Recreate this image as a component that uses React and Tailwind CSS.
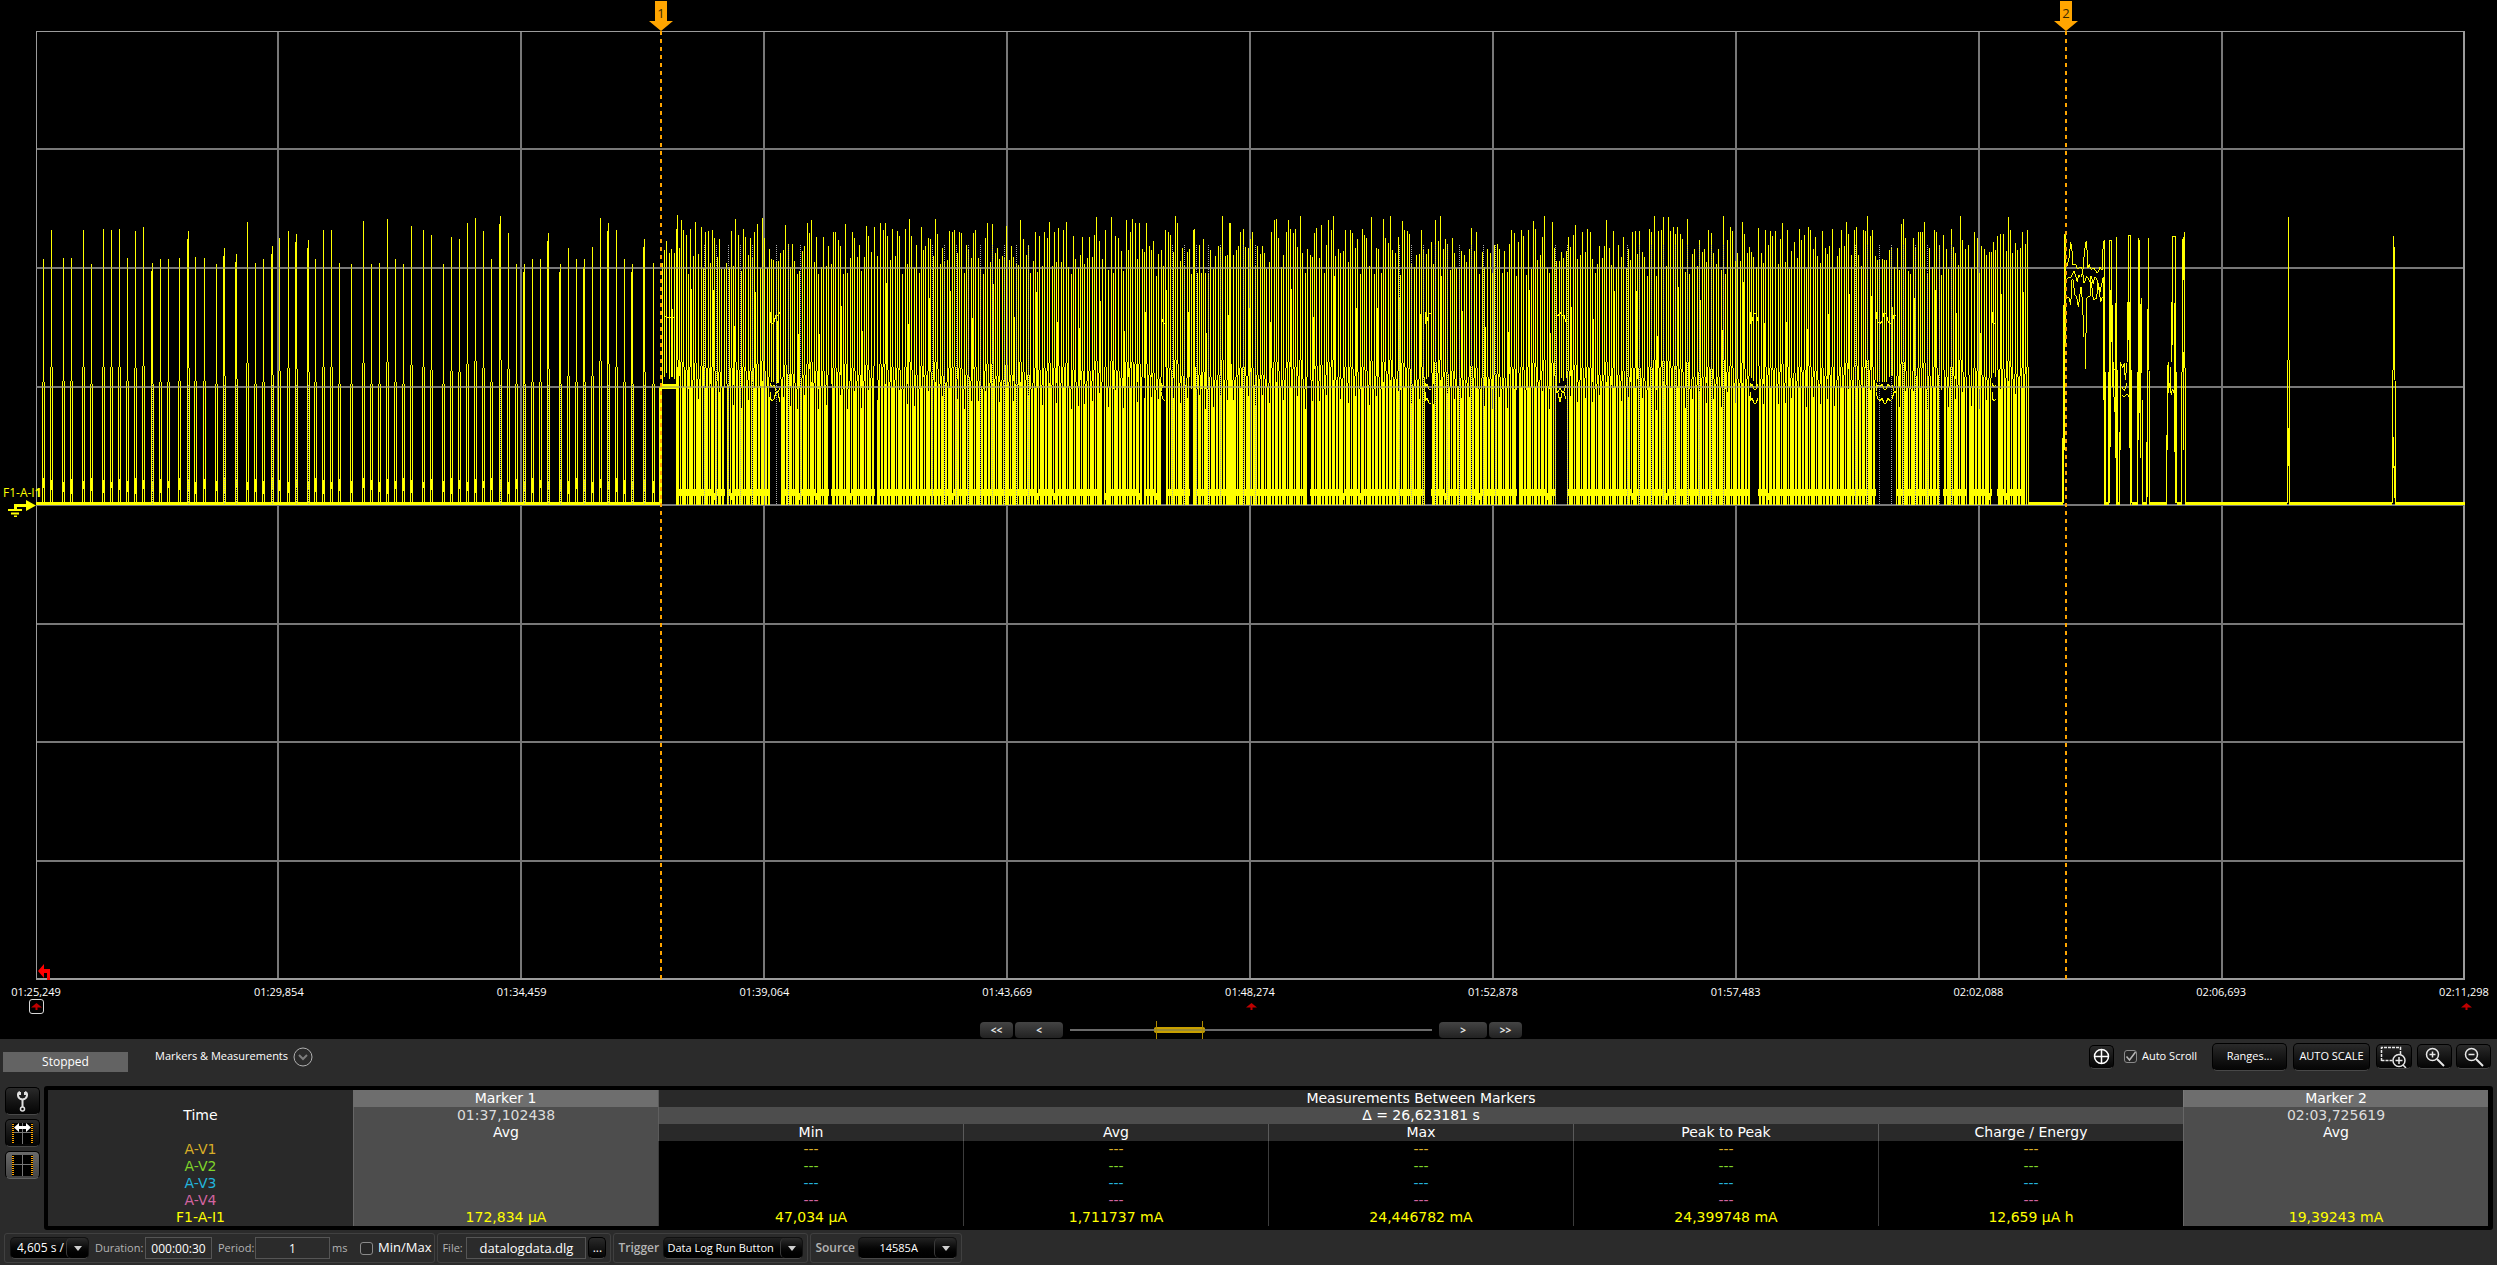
import React, { useState } from 'react';

const GRID_X = [278, 521, 764, 1007, 1250, 1493, 1736, 1979, 2222];
const GRID_Y = [149, 268, 387, 505, 624, 742, 861];

const TIME_LABELS = [
  '01:25,249', '01:29,854', '01:34,459', '01:39,064', '01:43,669', '01:48,274',
  '01:52,878', '01:57,483', '02:02,088', '02:06,693', '02:11,298',
];

// x, top y of the single pulses before marker 1
const PULSES = [
  43, 259, 51, 230, 63, 258, 71, 258, 83, 230, 91, 264, 103, 229, 111, 230, 119, 229, 127, 258,
  135, 231, 143, 227, 152, 263, 160, 259, 168, 259, 179, 258, 188, 231, 195, 257, 204, 258,
  216, 264, 224, 248, 236, 254, 247, 222, 255, 263, 263, 259, 272, 246, 279, 238, 288, 231,
  296, 234, 308, 240, 315, 259, 323, 230, 331, 230, 339, 263, 351, 264, 363, 221, 371, 264,
  379, 263, 387, 219, 395, 259, 403, 264, 411, 226, 423, 230, 431, 235, 443, 264, 451, 237,
  459, 239, 467, 223, 475, 218, 483, 231, 491, 259, 500, 216, 508, 233, 516, 264, 524, 264,
  532, 259, 540, 259, 548, 233, 560, 264, 568, 248, 576, 259, 584, 259, 592, 247, 600, 218,
  608, 223, 616, 230, 624, 259, 632, 264, 644, 239, 653, 263,
];

// burst data: pairs in thirds of a unit, measured from the segment origin
const BURSTS = [
  {
    x0: 640,
    y0: 180,
    peaks: [
      66, 250, 74, 210, 80, 183, 88, 219, 95, 207, 103, 219, 109, 147, 112, 105, 124, 120, 130, 150, 139, 165,
      151, 148, 166, 126, 184, 141, 196, 156, 205, 153, 217, 150, 224, 174, 238, 178, 274, 153, 286, 117,
      295, 165, 310, 147, 316, 171, 331, 174, 343, 156, 352, 132, 367, 114, 373, 174, 388, 207, 394, 237,
      400, 240, 408, 243, 415, 243, 421, 219, 436, 135, 445, 192, 457, 192, 493, 198, 502, 129, 508, 159,
      514, 120, 529, 171, 550, 171, 565, 198, 580, 156, 586, 156, 595, 180, 601, 198, 616, 132, 637, 156,
      643, 174, 658, 195, 679, 138, 685, 168, 703, 141, 721, 129, 730, 150, 736, 129, 742, 168, 757, 147,
      772, 153, 778, 168, 796, 147, 808, 117, 814, 168, 829, 195, 844, 141, 856, 198, 865, 174, 871, 177,
      886, 117, 892, 162, 907, 204, 928, 153, 937, 156, 943, 150, 958, 156, 964, 159, 979, 195, 1000, 159,
      1006, 150, 1036, 174, 1042, 129, 1057, 132, 1072, 204, 1099, 138, 1114, 198, 1141, 120, 1150, 177,
      1165, 198, 1186, 156, 1198, 168, 1213, 156, 1222, 174, 1228, 126, 1243, 156, 1255, 144, 1270, 150,
      1279, 126, 1300, 168, 1327, 171, 1348, 171, 1363, 165, 1369, 111, 1378, 183, 1396, 150, 1414, 111,
      1426, 168, 1435, 174, 1459, 120, 1471, 156, 1477, 117, 1486, 129,
    ],
  },
  {
    x0: 1130,
    y0: 200,
    peaks: [
      28, 69, 37, 147, 49, 69, 58, 138, 70, 123, 94, 150, 106, 90, 115, 96, 121, 105, 136, 48, 142, 69,
      157, 144, 178, 147, 190, 90, 193, 87, 208, 135, 220, 117, 241, 150, 265, 138, 277, 48, 286, 168,
      298, 69, 301, 69, 310, 165, 325, 138, 331, 96, 340, 87, 346, 141, 361, 117, 367, 96, 382, 138, 397, 138,
      403, 159, 424, 96, 433, 60, 439, 57, 445, 114, 469, 96, 475, 60, 481, 87, 490, 99, 496, 87, 502, 141,
      511, 48, 517, 159, 532, 147, 547, 171, 553, 99, 559, 84, 574, 75, 589, 135, 595, 60, 604, 90,
      610, 48, 616, 168, 625, 147, 631, 159, 646, 90, 661, 90, 667, 99, 682, 117, 697, 87, 703, 105,
      709, 114, 724, 51, 739, 144, 760, 57, 766, 114, 775, 129, 781, 48, 787, 150, 805, 111, 817, 63,
      823, 90, 832, 93, 838, 102, 874, 90, 880, 147, 895, 147, 904, 126, 916, 60, 925, 123, 931, 48,
      946, 117, 952, 132, 967, 114, 973, 159, 994, 153, 1003, 165, 1024, 84, 1039, 96, 1072, 147,
      1081, 159, 1093, 135, 1102, 132, 1123, 153, 1138, 132, 1144, 90, 1153, 99, 1165, 126, 1174, 90,
      1180, 108, 1195, 90, 1210, 63, 1216, 87, 1237, 111, 1243, 48, 1267, 66, 1273, 144, 1280, 183,
      1288, 183, 1294, 156, 1300, 174, 1309, 153, 1315, 111, 1321, 141, 1330, 105, 1336, 75,
    ],
  },
  {
    x0: 1580,
    y0: 200,
    peaks: [
      7, 96, 16, 156, 22, 87, 31, 96, 58, 138, 73, 138, 79, 60, 88, 144, 100, 93, 115, 135, 130, 111,
      145, 147, 157, 96, 166, 93, 178, 93, 187, 156, 208, 87, 214, 96, 223, 48, 235, 93, 244, 90, 250, 51,
      265, 51, 271, 93, 280, 81, 286, 102, 292, 81, 301, 102, 307, 117, 322, 57, 343, 147, 358, 120,
      373, 147, 385, 90, 394, 99, 400, 159, 415, 147, 430, 48, 442, 120, 451, 81, 457, 93, 487, 66,
      493, 102, 508, 141, 514, 156, 520, 171, 535, 84, 544, 159, 556, 90, 565, 135, 571, 93, 577, 108,
      586, 93, 601, 117, 607, 69, 622, 90, 634, 153, 643, 126, 658, 87, 664, 120, 673, 105, 685, 81,
      691, 90, 706, 111, 727, 93, 736, 144, 748, 138, 757, 87, 778, 144, 784, 90, 793, 138, 799, 66,
      805, 102, 823, 90, 829, 81, 835, 165, 850, 90, 856, 93, 862, 48, 871, 108, 877, 90, 886, 168,
      898, 177, 907, 177, 913, 180, 919, 180, 934, 141, 943, 201, 952, 144, 964, 72, 970, 57, 976, 114,
      1000, 114, 1006, 144, 1015, 96, 1021, 96, 1027, 96, 1033, 66, 1048, 144, 1063, 90, 1069, 96,
      1078, 135, 1090, 105, 1114, 87, 1120, 141, 1126, 159, 1141, 48, 1147, 120, 1156, 147, 1165, 135,
      1183, 96, 1192, 114, 1204, 138, 1219, 165, 1234, 156, 1240, 126, 1252, 108, 1261, 102, 1270, 102,
      1285, 51, 1291, 90, 1297, 159, 1306, 129, 1327, 96, 1336, 132, 1342, 90,
    ],
  },
];

// ranges in which the current never falls back to the base line
const HOLDS = [
  [663, 675], [725, 726], [770, 780], [829, 830], [875, 876], [1102, 1103], [1142, 1143], [1161, 1165],
  [1190, 1192], [1307, 1309], [1425, 1430], [1517, 1518], [1556, 1566], [1750, 1757], [1876, 1895],
  [1940, 1942], [1967, 1968], [1992, 1996],
];

const DOT_COLUMNS = [
  152, 188, 224, 236, 272, 296, 308, 500, 524, 548, 560, 584, 608, 632, 644, 704, 716, 728, 740, 752, 776,
  788, 800, 932, 944, 956, 968, 980, 992, 1004, 1016, 1028, 1172, 1184, 1196, 1208, 1220, 1243, 1255,
  1399, 1411, 1423, 1435, 1447, 1459, 1471, 1483, 1495, 1555, 1567, 1627, 1639, 1651, 1663, 1675, 1687,
  1699, 1711, 1723, 1855, 1867, 1879, 1891, 1903, 1915, 1927, 1939, 1951,
];

const inHold = (x) => HOLDS.some(([a, b]) => x >= a && x <= b);
const shoulder = (top) => Math.round(367 + (top - 230) / 2);

function expandBursts() {
  let seed = 7;
  const rand = () => {
    seed = (seed * 16807) % 2147483647;
    return seed / 2147483647;
  };
  const points = [];
  BURSTS.forEach(({ x0, y0, peaks }) => {
    for (let i = 0; i < peaks.length; i += 2) {
      points.push([Math.floor(x0 + peaks[i] / 3), Math.round(y0 + peaks[i + 1] / 3)]);
    }
  });
  const out = [];
  points.forEach(([x, y], i) => {
    out.push([x, y]);
    if (i === points.length - 1) return;
    const gap = points[i + 1][0] - x;
    const extra = Math.round(gap / 2.5) - 1;
    for (let k = 1; k <= extra; k++) {
      out.push([x + Math.round((gap * k) / (extra + 1)), 248 + Math.round(rand() * 28)]);
    }
  });
  return out;
}

const SPIKES = expandBursts();

function tracePath() {
  let d = '';
  for (let i = 0; i < PULSES.length; i += 2) {
    const x = PULSES[i];
    const top = PULSES[i + 1];
    const s = shoulder(top);
    d += `M${x + 0.5} ${top}V${s}M${x - 0.5} ${s}V505M${x + 1.5} ${s}V505`;
    d += `M${x + 0.5} ${478 + (i % 5)}V${488 + (i % 7)}`;
    if (DOT_COLUMNS.includes(x)) d += `M${x - 0.5} ${top + 8}V${s}`;
  }
  SPIKES.forEach(([x, top], i) => {
    const s = shoulder(top);
    d += `M${x + 0.5} ${top}V${s}`;
    [x - 1, x + 1].forEach((leg) => {
      if (!inHold(leg)) d += `M${leg + 0.5} ${s}V505`;
    });
    // some pulses are wider than one sample
    if (i % 3 === 1 && !inHold(x)) d += `M${x + 0.5} ${s + 20}V505`;
    if (i % 9 === 4) d += `M${x + 1.5} ${top + 60}V${s}`;
  });
  return d;
}

// short jagged lines inside the longer holds
function holdPath() {
  let d = '';
  HOLDS.filter(([a, b]) => b - a > 3 && a > 700).forEach(([a, b]) => {
    [312, 383, 392].forEach((base, row) => {
      d += `M${a} ${base}`;
      for (let x = a; x <= b + 1; x += 2) {
        d += `L${x} ${base + ((x * x + row * 5) % 13)}`;
      }
    });
  });
  return d;
}

function bandPath() {
  let d = '';
  for (let x = 677; x < 2025; x++) {
    if (!inHold(x)) d += `M${x} ${489 + (x % 17 === 0 ? 4 : 0)}h1v7h-1z`;
  }
  return d;
}

const TAIL = [
  'M248 970V775M251 970V375M254 810V162M257 162V500',
  'M260 262L268 230L272 185L277 220L279 255L288 255L292 265L305 262L308 278L312 230L317 186L320 186L322 232L324 265L328 252L332 268L342 265L352 280L360 262L366 270L370 185L373 180',
  'M260 295L272 292L282 272L292 305L296 285L302 292L308 278L312 310L320 288L330 305L333 288L340 312L344 290L352 300L360 335L366 310L370 290',
  'M260 350L268 355L272 375L276 300L280 300L284 345L290 350L295 380L303 320L307 360L312 470M316 458V566M319 458V355L330 348L332 300L336 325L340 360L350 355L354 310L362 365L368 350',
  'M371 290V660M373 180V975M376 575V970M386 575V970M389 180V970M389 182H395M391 330V800M394 180V485M397 375V610M400 545V640',
  'M398 548L403 570L410 570M398 610L402 650L405 655V697M407 370V835M409 172V975M412 570V970',
  'M419 755V970M422 545V810M422 548L428 565L433 550L436 600L439 570L441 550M425 620L433 632L441 610M425 645L432 652L441 642L450 655',
  'M443 365V545M446 167V480M445 167H452M449 365V805M452 167V570M452 570V975M455 570V970',
  'M473 575V970M476 175V780M479 180V700M482 372V835M484 355V580M487 660V970',
  'M499 785V970M503 387V950M505 175V570M508 573V970',
  'M560 765V970M563 555V810M566 547V640M566 605L575 645M572 560V640L578 628L584 645M575 365V545M578 170V495M577 170H587M584 370V815M587 172V575M587 575V970M590 575V970',
  'M605 575V970M608 178V575M611 515V810M611 170V300M614 157V565M616 565V970',
  'M925 111V540M922 540V970M928 540V970M925 745V857',
  'M1240 168V570M1243 202V600M1237 570V970M1246 603V970M1240 770V865M1243 858V955',
].join('');

const TAIL_BASE = [[146, 248], [376, 387], [412, 420], [455, 474], [487, 500], [508, 561], [590, 606], [616, 922], [928, 1237], [1246, 1456]];

function Plot() {
  return (
    <svg
      className="block h-full w-full"
      viewBox="36 31 2430 949"
      preserveAspectRatio="none"
      shapeRendering="crispEdges"
      aria-label="Data log trace"
    >
      <g fill="#787878">
        {GRID_X.map((x) => <rect key={x} x={x - 1} y="31" width="2" height="948" />)}
        {GRID_Y.map((y) => <rect key={y} x="36" y={y - 1} width="2429" height="2" />)}
      </g>
      <path d="M36 31H2465V980H36Z M37 32V978H2463V32Z" fill="#9c9c9c" fillRule="evenodd" />

      <path d={tracePath()} stroke="#ffff00" fill="none" />
      <path d={holdPath()} stroke="#ffff00" fill="none" />
      <path d={bandPath()} fill="#ffff00" />
      <path d="M36 502H661V505H36Z M662 384H676V389H662Z M659 387H662V505H659Z" fill="#ffff00" />
      <path d="M664 316L668 318L675 317" stroke="#ffff00" fill="none" />
      <g transform="translate(1980 180) scale(0.33333)">
        <path d={TAIL} stroke="#ffff00" strokeWidth="3" fill="none" />
        {TAIL_BASE.map(([a, b]) => <rect key={a} x={a} y="966" width={b - a} height="9" fill="#ffff00" />)}
      </g>

      <g stroke="#a8a8a8" strokeDasharray="1 1">
        {DOT_COLUMNS.map((x) => (
          <line key={x} x1={x + 0.5} x2={x + 0.5} y1={x > 661 ? 245 : 385} y2="504" />
        ))}
      </g>
      <g fill="#787878" fillOpacity="0.4">
        <rect x="36" y="267" width="2000" height="2" />
        <rect x="36" y="386" width="2000" height="2" />
      </g>
      <rect x="36" y="505" width="2428" height="1" fill="#787878" />
    </svg>
  );
}

function MarkerFlag({ label, className }) {
  return (
    <div className={`absolute top-0 bottom-[59px] flex w-6 -translate-x-1/2 flex-col items-center ${className}`}>
      <svg width="24" height="31" viewBox="0 0 24 31" className="shrink-0">
        <path d="M6 1H18V21H24L12 31L0 21H6Z" fill="#ffa500" />
        <text x="12" y="18" textAnchor="middle" fontSize="13" fill="#3a2800" fontFamily="Open Sans, sans-serif">{label}</text>
      </svg>
      <div className="w-[2px] flex-1 bg-[repeating-linear-gradient(to_bottom,#ffa500_0_4px,transparent_4px_8px)]" />
    </div>
  );
}

function TriggerArrow() {
  return (
    <svg width="11" height="7" viewBox="0 0 11 7">
      <path d="M5.500 0L11 4.500H6.500V7H4.500V4.500H0Z" fill="#c00000" />
    </svg>
  );
}

function DarkButton({ className = '', children, ...rest }) {
  return (
    <button
      type="button"
      className={`flex items-center justify-center rounded-[5px] border border-black border-b-[#484848] bg-linear-to-b from-[#2a2a2a] to-[#050505] text-white ${className}`}
      {...rest}
    >
      {children}
    </button>
  );
}

function NavButton({ className, children, ...rest }) {
  return (
    <button
      type="button"
      className={`flex h-4 items-center justify-center rounded-[4px] bg-linear-to-b from-[#444] to-[#222] text-[10px] leading-3 font-bold text-[#e6e6e6] ${className}`}
      {...rest}
    >
      {children}
    </button>
  );
}

function Drop({ label, options, className, selectClass }) {
  return (
    <div className={`relative h-[22px] rounded-[5px] border border-[#111] border-b-[#484848] bg-linear-to-b from-[#222] to-black ${className}`}>
      <select aria-label={label} className={`h-5 w-full appearance-none bg-transparent leading-5 text-white outline-none ${selectClass}`}>
        {options.map((o) => <option key={o}>{o}</option>)}
      </select>
      <span className="pointer-events-none absolute inset-y-0 right-0 flex w-[22px] items-center justify-center rounded-[5px] border-l border-[#3a3a3a] bg-linear-to-b from-[#2c2c2c] to-black">
        <svg width="8" height="5" viewBox="0 0 8 5"><path d="M0 0H8L4 5Z" fill="#cfcfcf" /></svg>
      </span>
    </div>
  );
}

function Group({ className = '', children }) {
  return (
    <div className={`flex h-[30px] items-center rounded-[3px] border border-[#404040] text-[12px] text-[#b4b4b4] ${className}`}>
      {children}
    </div>
  );
}

function MiniScreen({ arrows }) {
  return (
    <svg width="21" height="21" viewBox="0 0 21 21">
      <rect width="21" height="21" fill="#000" />
      <path d="M10.500 0V21M2 9.500H19" stroke="#777" fill="none" />
      <path d="M1 1V21M20 1V21" stroke="#ffa500" strokeWidth="2" strokeDasharray="1 1" />
      {arrows && <path d="M2 4.500L7 0V3H9V6H7V9ZM19 4.500L14 0V3H12V6H14V9Z M9 3H12V6H9Z" fill="#fff" />}
    </svg>
  );
}

const CHANNELS = [
  { name: 'A-V1', color: 'text-[#d9ae27]' },
  { name: 'A-V2', color: 'text-[#7fd42a]' },
  { name: 'A-V3', color: 'text-[#22b4dc]' },
  { name: 'A-V4', color: 'text-[#d264a0]' },
];
const COLUMNS = ['Min', 'Avg', 'Max', 'Peak to Peak', 'Charge / Energy'];
const F1_VALUES = ['47,034 µA', '1,711737 mA', '24,446782 mA', '24,399748 mA', '12,659 µA h'];

function Measurements() {
  return (
    <table className="w-full table-fixed border-separate border-spacing-0 text-center font-['DejaVu_Sans',sans-serif] text-[14px] leading-[17px] text-white [&_td]:h-[17px] [&_td]:p-0 [&_th]:h-[17px] [&_th]:p-0 [&_th]:font-normal">
      <thead>
        <tr>
          <td className="bg-[#292929]" />
          <th className="bg-[#6e6e6e]">Marker 1</th>
          <th colSpan={5} className="border-l border-[#5a5a5a] bg-[#292929]">Measurements Between Markers</th>
          <th className="border-l border-[#7a7a7a] bg-[#6e6e6e]">Marker 2</th>
        </tr>
        <tr>
          <th className="bg-[#292929]">Time</th>
          <td className="border-l border-[#666] bg-[#4d4d4d] text-[#dcdcdc]">01:37,102438</td>
          <td colSpan={5} className="border-l border-[#5f5f5f] bg-[#4d4d4d]">Δ = 26,623181 s</td>
          <td className="border-l border-[#666] bg-[#4d4d4d] text-[#dcdcdc]">02:03,725619</td>
        </tr>
        <tr>
          <td className="bg-[#292929]" />
          <th className="border-l border-[#666] bg-[#4d4d4d]">Avg</th>
          {COLUMNS.map((c) => <th key={c} className="border-l border-[#5a5a5a] bg-[#292929]">{c}</th>)}
          <th className="border-l border-[#666] bg-[#4d4d4d]">Avg</th>
        </tr>
      </thead>
      <tbody>
        {CHANNELS.map((ch) => (
          <tr key={ch.name} className={ch.color}>
            <th className="bg-[#292929]">{ch.name}</th>
            <td className="border-l border-[#666] bg-[#4d4d4d]" />
            {COLUMNS.map((c) => <td key={c} className="border-l border-[#3c3c3c]">---</td>)}
            <td className="border-l border-[#666] bg-[#4d4d4d]" />
          </tr>
        ))}
        <tr className="text-[#ffff00]">
          <th className="bg-[#292929]">F1-A-I1</th>
          <td className="border-l border-[#666] bg-[#4d4d4d]">172,834 µA</td>
          {F1_VALUES.map((v) => <td key={v} className="border-l border-[#3c3c3c]">{v}</td>)}
          <td className="border-l border-[#666] bg-[#4d4d4d]">19,39243 mA</td>
        </tr>
      </tbody>
    </table>
  );
}

function App() {
  const [autoScroll, setAutoScroll] = useState(true);
  const [minMax, setMinMax] = useState(false);

  return (
    <main className="flex h-screen w-full flex-col overflow-hidden bg-black font-['Open_Sans',sans-serif] text-[12px] text-white">
      <section className="relative flex min-h-0 flex-1 flex-col pt-[31px] pr-[31px] pl-9">
        <div className="relative min-h-0 flex-1">
          <Plot />
          <svg className="absolute bottom-0 left-[2px]" width="12" height="16" viewBox="0 0 12 16">
            <path d="M0 7L6 0V5H12V16H9V9H6V14Z" fill="#ff0000" />
          </svg>
          <div className="absolute top-[49%] -left-9 -translate-y-[10px]">
            <div className="pl-[3px] text-[12px] leading-[14px] whitespace-nowrap text-[#ffff00]">F1-A-I<b>1</b></div>
            <svg className="ml-[8px] block" width="28" height="17" viewBox="0 0 28 17">
              <path d="M7.500 9V5.500H20" stroke="#ffff00" strokeWidth="3" fill="none" />
              <path d="M18 0L28 5.500L18 11Z" fill="#ffff00" />
              <path d="M0 10H14M3 13.500H11M6 16.500H9" stroke="#ffff00" strokeWidth="2" />
            </svg>
          </div>
        </div>

        <div className="mt-[5px] mr-[2px] flex h-[14px] justify-between text-[11px] leading-[14px]">
          {TIME_LABELS.map((t) => (
            <span key={t} className="flex w-0 justify-center whitespace-nowrap">{t}</span>
          ))}
        </div>
        <div className="flex h-[15px] justify-between">
          <span className="flex w-0 justify-center">
            <span className="flex h-[15px] w-[15px] shrink-0 items-center justify-center rounded-[3px] border border-[#d8d8d8]"><TriggerArrow /></span>
          </span>
          <span className="flex w-0 items-center justify-center"><span className="shrink-0"><TriggerArrow /></span></span>
          <span className="flex w-0 items-center justify-center"><span className="shrink-0"><TriggerArrow /></span></span>
        </div>
        <nav className="mt-[7px] flex h-[18px] items-center justify-center gap-[2px]">
          <NavButton className="w-[33px]" aria-label="First">&lt;&lt;</NavButton>
          <NavButton className="w-[48px]" aria-label="Back">&lt;</NavButton>
          <div className="relative mx-[5px] h-[18px] w-[362px]">
            <div className="absolute top-2 h-[2px] w-full bg-[#6a6a6a]" />
            <div className="absolute top-[6px] left-[84px] h-[6px] w-[51px] rounded-[2px] border-y-2 border-[#c8a000] bg-[#9a8a30]" />
            <div className="absolute top-0 left-[86px] h-[18px] w-[47px] border-x border-[#b08c00]" />
          </div>
          <NavButton className="w-[48px]" aria-label="Forward">&gt;</NavButton>
          <NavButton className="w-[33px]" aria-label="Last">&gt;&gt;</NavButton>
        </nav>

        <div className="pointer-events-none absolute inset-y-0 right-[33px] left-9">
          <MarkerFlag label="1" className="left-[25.76%]" />
          <MarkerFlag label="2" className="left-[83.6%]" />
        </div>
      </section>

      <section className="shrink-0 bg-[#2b2b2b]">
        <div className="flex h-[47px] items-start pr-[6px] pl-[3px]">
          <div className="mt-[13px] h-5 w-[125px] bg-[#636363] text-center text-[12px] leading-5">Stopped</div>
          <div className="ml-[27px] flex h-[35px] items-center gap-[5px] text-[11px]">
            <span>Markers &amp; Measurements</span>
            <button type="button" aria-label="Choose view">
              <svg width="20" height="20" viewBox="0 0 20 20" fill="none">
                <circle cx="10" cy="10" r="9" stroke="#b0b0b0" />
                <path d="M6 8L10 12L14 8" stroke="#7d7d7d" strokeWidth="2" />
              </svg>
            </button>
          </div>

          <div className="ml-auto flex h-[35px] items-center">
            <DarkButton className="h-6 w-[25px]" aria-label="Center">
              <svg width="17" height="17" viewBox="0 0 17 17" fill="none" stroke="#fff">
                <circle cx="8.500" cy="8.500" r="7" strokeWidth="1.500" />
                <path d="M8.500 2V15M2 8.500H15" strokeWidth="1.500" />
              </svg>
            </DarkButton>
            <label className="ml-[10px] flex items-center gap-[5px]">
              <span className="relative flex">
                <input
                  type="checkbox"
                  checked={autoScroll}
                  onChange={(e) => setAutoScroll(e.target.checked)}
                  className="h-[13px] w-[13px] appearance-none rounded-[3px] border border-[#8a8a8a] bg-[#262626]"
                />
                {autoScroll && (
                  <svg className="pointer-events-none absolute inset-0" width="13" height="13" viewBox="0 0 13 13">
                    <path d="M2.500 6.500L5.500 10L11.500 2" stroke="#b8b8b8" strokeWidth="1.500" fill="none" />
                  </svg>
                )}
              </span>
              <span className="w-[58px] text-[11px] whitespace-nowrap">Auto Scroll</span>
            </label>
            <DarkButton className="ml-3 h-7 w-[75px] text-[11px]">Ranges...</DarkButton>
            <DarkButton className="ml-[6px] h-7 w-[77px] text-[11px] whitespace-nowrap">AUTO SCALE</DarkButton>
            <DarkButton className="ml-[6px] h-[25px] w-[36px]" aria-label="Zoom to area">
              <svg width="28" height="22" viewBox="0 0 28 22" fill="none" stroke="#e8e8e8">
                <path d="M1.500 15V1.500H20.500V8M1.500 14.500H13" strokeDasharray="3 1" strokeWidth="1.500" />
                <circle cx="19" cy="14.500" r="6" strokeWidth="1.500" />
                <path d="M19 11V18M15.500 14.500H22.500M23 19L26 22" strokeWidth="1.500" />
              </svg>
            </DarkButton>
            <DarkButton className="ml-[5px] h-[25px] w-[35px]" aria-label="Zoom in">
              <svg width="20" height="20" viewBox="0 0 20 20" fill="none" stroke="#e8e8e8">
                <circle cx="7.500" cy="7.500" r="6" strokeWidth="1.500" />
                <path d="M7.500 4.500V10.500M4.500 7.500H10.500" strokeWidth="1.500" />
                <path d="M12 12L19 19" strokeWidth="2" />
              </svg>
            </DarkButton>
            <DarkButton className="ml-[4px] h-[25px] w-[35px]" aria-label="Zoom out">
              <svg width="20" height="20" viewBox="0 0 20 20" fill="none" stroke="#e8e8e8">
                <circle cx="7.500" cy="7.500" r="6" strokeWidth="1.500" />
                <path d="M4.500 7.500H10.500" strokeWidth="1.500" />
                <path d="M12 12L19 19" strokeWidth="2" />
              </svg>
            </DarkButton>
          </div>
        </div>

        <div className="flex gap-1 pr-1 pl-[5px]">
          <div className="flex flex-col gap-1 pt-[1px]">
            <DarkButton className="h-7 w-[35px]" aria-label="Settings">
              <svg width="13" height="21" viewBox="0 0 13 21" fill="none" stroke="#e0e0e0">
                <path d="M4 1C1 2 1 8 6.500 8.500C12 8 12 2 9 1M4 1V4M9 1V4" strokeWidth="2" />
                <path d="M6.500 9V16" strokeWidth="2" />
                <circle cx="6.500" cy="18" r="2" strokeWidth="1.500" />
              </svg>
            </DarkButton>
            <DarkButton className="h-7 w-[35px]" aria-label="Marker span"><MiniScreen arrows /></DarkButton>
            <button type="button" aria-label="Marker table" className="flex h-7 w-[35px] items-center justify-center rounded-[5px] border border-black border-b-[#606060] bg-linear-to-b from-[#6a6a6a] to-[#444]">
              <MiniScreen />
            </button>
          </div>
          <div className="min-w-0 flex-1 rounded-[3px] border-4 border-black bg-black pr-px">
            <Measurements />
          </div>
        </div>

        <div className="flex gap-[2px] pt-[3px] pb-[2px] pl-1">
          <Group className="pr-[3px] pl-[5px]">
            <Drop label="Time per division" options={['4,605 s /']} className="w-[79px]" selectClass="pl-[6px] text-[12px]" />
            <label className="ml-[6px] flex items-center">
              <span className="w-[50px] whitespace-nowrap text-[11px]">Duration:</span>
              <input defaultValue="000:00:30" className="h-[22px] w-[67px] border border-[#555] bg-transparent text-center text-[12px] text-white" />
            </label>
            <label className="ml-[6px] flex items-center">
              <span className="w-[37px] text-[11px]">Period:</span>
              <input defaultValue="1" className="h-[22px] w-[75px] border border-[#555] bg-transparent text-center text-[12px] text-white" />
            </label>
            <span className="ml-[2px] w-[28px] text-[11px]">ms</span>
            <label className="flex items-center gap-[5px] text-[13px] text-white">
              <input
                type="checkbox"
                checked={minMax}
                onChange={(e) => setMinMax(e.target.checked)}
                className="h-[13px] w-[13px] appearance-none rounded-[3px] border border-[#8a8a8a] bg-[#262626] checked:bg-[#8a8a8a]"
              />
              Min/Max
            </label>
          </Group>
          <Group className="px-1">
            <label className="flex items-center">
              <span className="w-[24px] text-[11px]">File:</span>
              <input defaultValue="datalogdata.dlg" className="h-[22px] w-[120px] border border-[#555] bg-transparent text-center text-[13px] text-white" />
            </label>
            <DarkButton className="ml-[2px] h-[22px] w-[18px] text-[12px]" aria-label="Browse">...</DarkButton>
          </Group>
          <Group className="px-1 font-semibold">
            <span className="w-[45px] text-[12px]">Trigger</span>
            <Drop label="Trigger" options={['Data Log Run Button']} className="w-[140px] font-normal" selectClass="pl-[3px] text-[11px]" />
          </Group>
          <Group className="px-1 font-semibold">
            <span className="w-[43px] text-[12px]">Source</span>
            <Drop label="Source" options={['14585A']} className="w-[99px] font-normal" selectClass="pl-5 text-[11px]" />
          </Group>
        </div>
      </section>
    </main>
  );
}

export default App;
